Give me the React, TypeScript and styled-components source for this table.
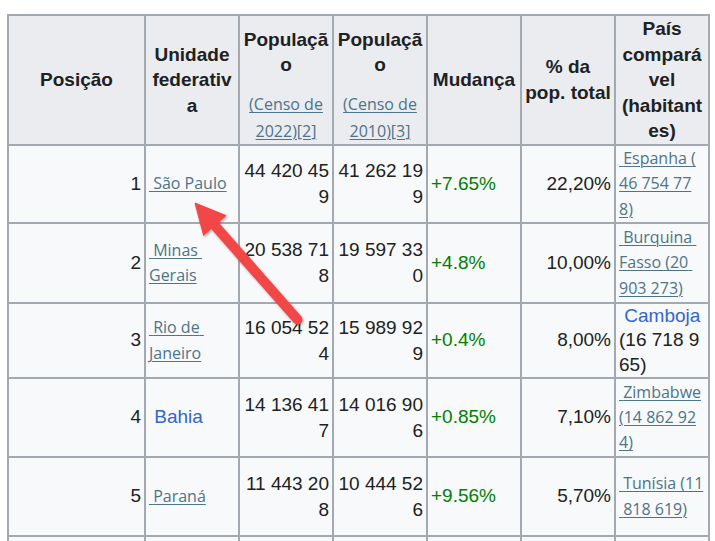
import React from "react";
import styled, { createGlobalStyle } from "styled-components";

const GlobalStyle = createGlobalStyle`
  html, body { margin: 0; padding: 0; background: #ffffff; }
  body { font-family: "Liberation Sans", Arial, sans-serif; color: #202122; }
`;

const Page = styled.div`
  position: relative;
  width: 715px;
  height: 541px;
  overflow: hidden;
  padding: 14px 0 0 7px;
  box-sizing: border-box;
`;

const Table = styled.table`
  table-layout: fixed;
  width: 703px;
  border-collapse: separate;
  border-spacing: 0;
  border-top: 2px solid #a2a9b1;
  border-left: 2px solid #a2a9b1;
  font-size: 19px;
  line-height: 24.3px;
`;

const Row = styled.tr<{ $h: number }>`
  height: ${(p) => p.$h}px;
`;

const HeadCell = styled.th<{ $w: number; $valign?: string }>`
  box-sizing: border-box;
  width: ${(p) => p.$w}px;
  padding: 0 3px;
  background: #eaecf0;
  border-right: 2px solid #a2a9b1;
  border-bottom: 2px solid #a2a9b1;
  font-weight: bold;
  line-height: 25.6px;
  text-align: center;
  vertical-align: ${(p) => p.$valign ?? "middle"};
  overflow-wrap: anywhere;
  color: #202122;
`;

const Cell = styled.td<{ $align?: string; $color?: string; $lh?: number }>`
  box-sizing: border-box;
  padding: 0 3px;
  background: #f8f9fa;
  border-right: 2px solid #a2a9b1;
  border-bottom: 2px solid #a2a9b1;
  text-align: ${(p) => p.$align ?? "left"};
  vertical-align: middle;
  overflow-wrap: anywhere;
  line-height: ${(p) => (p.$lh ? `${p.$lh}px` : "inherit")};
  color: ${(p) => p.$color ?? "#202122"};
`;

const CensusNote = styled.div`
  margin-top: 13.6px;
  font-weight: normal;
`;

const RefLink = styled.a`
  font-family: "Open Sans", "Noto Sans", sans-serif;
  font-size: 16px;
  font-weight: 400;
  line-height: 25.3px;
  white-space: nowrap;
  color: #4d7489;
  text-decoration: underline;
  text-decoration-thickness: 1px;
  text-underline-offset: 2px;
  cursor: pointer;
`;

const WikiLink = styled.a`
  color: #3366cc;
  text-decoration: none;
  cursor: pointer;
`;

const ArrowSvg = styled.svg`
  position: absolute;
  left: 180px;
  top: 190px;
  overflow: visible;
  pointer-events: none;
`;

type DataRow = {
  pos: string;
  h: number;
  uf?: React.ReactNode;
  p22?: string;
  p10?: string;
  change?: string;
  share?: string;
  country?: React.ReactNode;
};

const NB = "\u00a0";
const num = (s: string) => s.replace(/ /g, NB);

const rows: DataRow[] = [
  {
    pos: "1",
    h: 78,
    uf: <RefLink>{NB}São Paulo</RefLink>,
    p22: "44 420 459",
    p10: "41 262 199",
    change: "+7.65%",
    share: "22,20%",
    country: (
      <RefLink>
        {NB}Espanha (<br />
        46 754 77
        <br />
        8)
      </RefLink>
    ),
  },
  {
    pos: "2",
    h: 80,
    uf: (
      <RefLink>
        {NB}Minas{NB}
        <br />
        Gerais
      </RefLink>
    ),
    p22: "20 538 718",
    p10: "19 597 330",
    change: "+4.8%",
    share: "10,00%",
    country: (
      <RefLink>
        {NB}Burquina{NB}
        <br />
        Fasso (20{NB}
        <br />
        903 273)
      </RefLink>
    ),
  },
  {
    pos: "3",
    h: 75,
    uf: (
      <RefLink>
        {NB}Rio de{NB}
        <br />
        Janeiro
      </RefLink>
    ),
    p22: "16 054 524",
    p10: "15 989 929",
    change: "+0.4%",
    share: "8,00%",
    country: (
      <>
        {NB}
        <WikiLink>Camboja</WikiLink>
        <br />
        (16{NB}718{NB}9<br />
        65)
      </>
    ),
  },
  {
    pos: "4",
    h: 79,
    uf: (
      <>
        {NB}
        <WikiLink>Bahia</WikiLink>
      </>
    ),
    p22: "14 136 417",
    p10: "14 016 906",
    change: "+0.85%",
    share: "7,10%",
    country: (
      <RefLink>
        {NB}Zimbabwe
        <br />
        (14 862 92
        <br />
        4)
      </RefLink>
    ),
  },
  {
    pos: "5",
    h: 79,
    uf: <RefLink>{NB}Paraná</RefLink>,
    p22: "11 443 208",
    p10: "10 444 526",
    change: "+9.56%",
    share: "5,70%",
    country: (
      <RefLink>
        {NB}Tunísia (11
        <br />
        {NB}818 619)
      </RefLink>
    ),
  },
  { pos: "", h: 79 },
];

function Arrow() {
  return (
    <ArrowSvg width="130" height="145" viewBox="0 0 130 145">
      <defs>
        <filter id="arrowShadow" x="-20%" y="-20%" width="140%" height="140%">
          <feDropShadow dx="1" dy="1.5" stdDeviation="1.2" floodColor="#000" floodOpacity="0.3" />
        </filter>
      </defs>
      <g filter="url(#arrowShadow)" fill="#f24646" stroke="#f24646">
        <line x1="33" y1="33.5" x2="117.5" y2="129.5" strokeWidth="10" strokeLinecap="round" />
        <polygon points="15,13 23.6,45.4 46.1,25.6" strokeWidth="1" strokeLinejoin="round" />
      </g>
    </ArrowSvg>
  );
}

export default function App() {
  return (
    <>
      <GlobalStyle />
      <Page>
        <Table>
          <thead>
            <Row $h={130}>
              <HeadCell $w={137}>Posição</HeadCell>
              <HeadCell $w={94}>Unidade federativa</HeadCell>
              <HeadCell $w={94} $valign="bottom">
                População
                <CensusNote>
                  <RefLink>
                    (Censo de
                    <br />
                    2022)[2]
                  </RefLink>
                </CensusNote>
              </HeadCell>
              <HeadCell $w={94} $valign="bottom">
                População
                <CensusNote>
                  <RefLink>
                    (Censo de
                    <br />
                    2010)[3]
                  </RefLink>
                </CensusNote>
              </HeadCell>
              <HeadCell $w={94}>Mudança</HeadCell>
              <HeadCell $w={94}>% da pop. total</HeadCell>
              <HeadCell $w={94}>País comparável (habitantes)</HeadCell>
            </Row>
          </thead>
          <tbody>
            {rows.map((r, i) => (
              <Row key={i} $h={r.h}>
                <Cell $align="right">{r.pos}</Cell>
                <Cell>{r.uf}</Cell>
                <Cell $align="right" $lh={25.6}>
                  {r.p22 && num(r.p22)}
                </Cell>
                <Cell $align="right" $lh={25.6}>
                  {r.p10 && num(r.p10)}
                </Cell>
                <Cell $color="#008000">{r.change}</Cell>
                <Cell $align="right">{r.share}</Cell>
                <Cell>{r.country}</Cell>
              </Row>
            ))}
          </tbody>
        </Table>
        <Arrow />
      </Page>
    </>
  );
}
